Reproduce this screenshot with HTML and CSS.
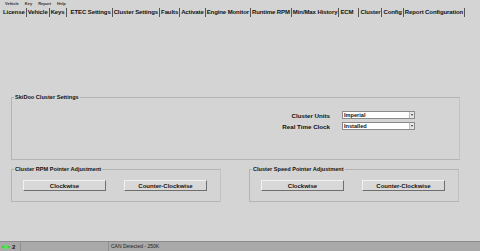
FILE: index.html
```html
<!DOCTYPE html>
<html lang="en">
<head>
  <meta charset="UTF-8">
  <title>Cluster Settings</title>
  <link rel="stylesheet" href="styles.css">
</head>
<body>
  <div class="app">
    <div class="menubar">
      <span>Vehicle</span><span>Key</span><span>Report</span><span>Help</span>
    </div>
    <div class="tabs">
      <span class="tab">License</span>
      <span class="tab">Vehicle</span>
      <span class="tab">Keys</span>
      <span class="tab gap">ETEC Settings</span>
      <span class="tab active">Cluster Settings</span>
      <span class="tab">Faults</span>
      <span class="tab">Activate</span>
      <span class="tab">Engine Monitor</span>
      <span class="tab">Runtime RPM</span>
      <span class="tab">Min/Max History</span>
      <span class="tab wide">ECM</span>
      <span class="tab">Cluster</span>
      <span class="tab">Config</span>
      <span class="tab">Report Configuration</span>
    </div>

    <div class="content">
      <fieldset class="group settings">
        <legend>SkiDoo Cluster Settings</legend>
        <div class="field-grid">
          <label>Cluster Units</label>
          <div class="select"><span>Imperial</span><i class="arrow"></i></div>
          <label>Real Time Clock</label>
          <div class="select"><span>Installed</span><i class="arrow"></i></div>
        </div>
      </fieldset>

      <div class="pointer-row">
        <fieldset class="group pointer">
          <legend>Cluster RPM Pointer Adjustment</legend>
          <div class="btn-row">
            <button class="btn">Clockwise</button>
            <button class="btn">Counter-Clockwise</button>
          </div>
        </fieldset>
        <fieldset class="group pointer">
          <legend>Cluster Speed Pointer Adjustment</legend>
          <div class="btn-row">
            <button class="btn">Clockwise</button>
            <button class="btn">Counter-Clockwise</button>
          </div>
        </fieldset>
      </div>
    </div>

    <div class="statusbar">
      <span class="led"><svg width="8" height="4" viewBox="0 0 8 4"><rect x="0" y="1" width="8" height="2" fill="#3fcf3f"/><rect x="2" y="0" width="4" height="4" fill="#55e055"/></svg></span>
      <span class="count">2</span>
      <span class="panel long"></span>
      <span class="panel can">CAN Detected - 250K</span>
    </div>
  </div>
</body>
</html>
```

FILE: styles.css
```css
:root {
  --bg: #d4d4d4;
  --line: #b4b4b4;
  --status: #a9a9a9;
  --text: #111;
}

* {
  box-sizing: border-box;
}

body {
  margin: 0;
  background: var(--bg);
  font-family: 'Liberation Sans', Arial, sans-serif;
  color: var(--text);
}

.app {
  width: 480px;
  height: 251px;
  display: flex;
  flex-direction: column;
}

.menubar {
  height: 7px;
  display: flex;
  gap: 6px;
  padding-left: 5px;
  font-size: 4px;
  line-height: 7px;
  font-weight: bold;
  color: #333;
}

.tabs {
  height: 11px;
  display: flex;
  padding-left: 2px;
  font-size: 6px;
  letter-spacing: -0.1px;
  font-weight: bold;
  line-height: 11px;
  white-space: nowrap;
}

.tab {
  padding: 0 1px;
  border-right: 1px solid #555;
  height: 9px;
  margin-top: 1px;
  line-height: 9px;
}

.tab.gap {
  margin-left: 3px;
}

.tab.wide {
  padding-right: 5px;
}

.content {
  flex: 1;
  display: flex;
  flex-direction: column;
  padding: 76px 20px 0 11px;
}

.group {
  margin: 0;
  border: 1px solid var(--line);
  border-right-color: #c2c2c2;
  padding: 0;
  min-width: 0;
}

.group legend {
  font-size: 5.6px;
  font-weight: bold;
  padding: 0 1px;
  margin-left: 2px;
  line-height: 6px;
}

.settings {
  height: 66px;
}

.field-grid {
  display: grid;
  grid-template-columns: 318px 73px;
  column-gap: 12px;
  row-gap: 3px;
  margin-top: 11px;
  align-items: center;
}

.field-grid label {
  text-align: right;
  font-size: 6.2px;
  font-weight: bold;
}

.select {
  height: 8px;
  background: #fff;
  border: 1px solid #8a8a8a;
  display: flex;
  justify-content: space-between;
  align-items: center;
  font-size: 5.6px;
  font-weight: bold;
  padding-left: 1px;
}

.arrow {
  width: 5px;
  height: 6px;
  background: #e6e6e6;
  border-left: 1px solid #bbb;
  position: relative;
}

.arrow::after {
  content: "";
  position: absolute;
  left: 1px;
  top: 2px;
  border-left: 1.5px solid transparent;
  border-right: 1.5px solid transparent;
  border-top: 2px solid #333;
}

.pointer-row {
  display: flex;
  gap: 28px;
  margin-top: 6px;
}

.pointer {
  width: 210px;
  height: 36px;
}

.btn-row {
  display: flex;
  gap: 18px;
  padding: 8px 0 0 11px;
}

.btn {
  width: 83px;
  height: 11px;
  padding: 0;
  background: #d8d8d8;
  border: 1px solid;
  border-color: #f2f2f2 #6e6e6e #6e6e6e #f2f2f2;
  font-family: inherit;
  font-size: 6px;
  font-weight: bold;
  color: var(--text);
}

.statusbar {
  height: 10px;
  background: var(--status);
  border-top: 1px solid #8c8c8c;
  display: flex;
  align-items: center;
  font-size: 5px;
}

.led {
  width: 12px;
  display: flex;
  justify-content: center;
}

.count {
  width: 8px;
  font-weight: bold;
  font-size: 6px;
}

.panel {
  height: 9px;
  border-left: 1px solid #909090;
  line-height: 9px;
}

.long {
  width: 88px;
}

.can {
  width: 240px;
  padding-left: 2px;
  color: #222;
}
```
